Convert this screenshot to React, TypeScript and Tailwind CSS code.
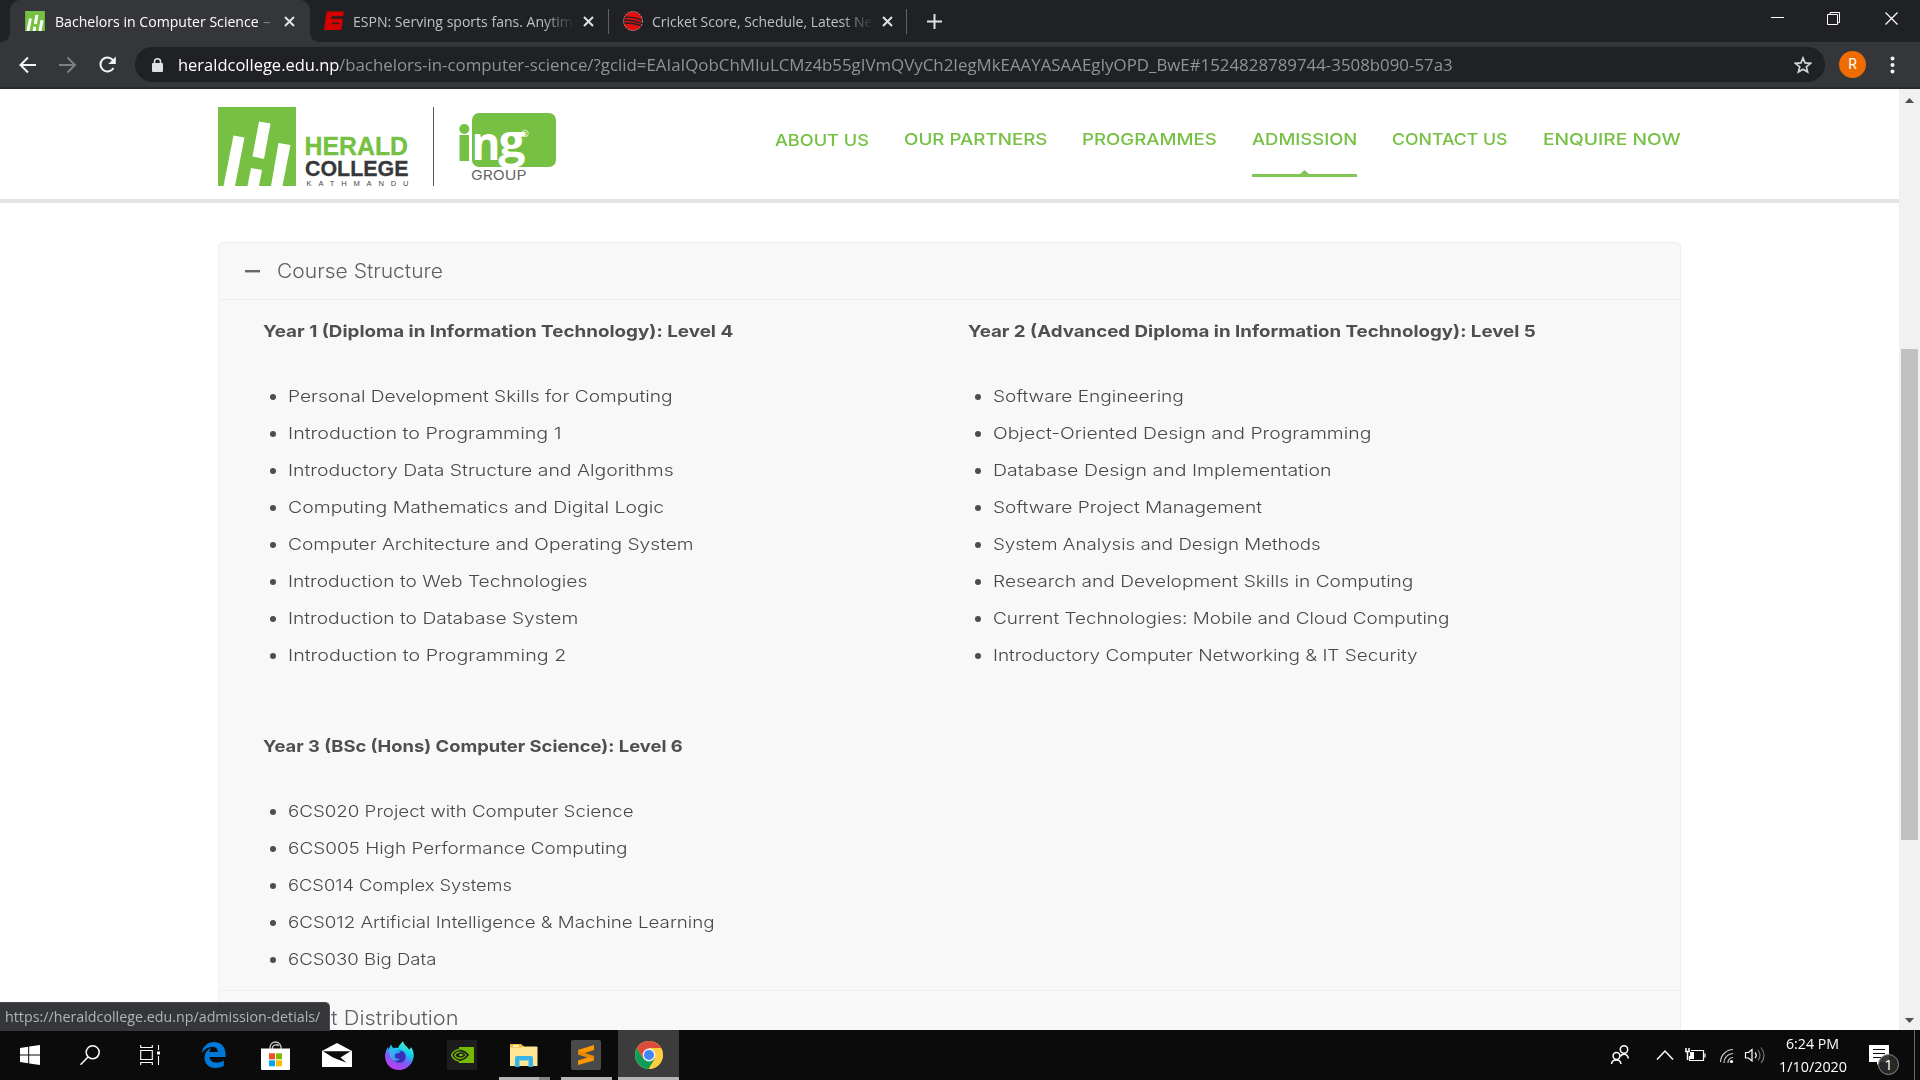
import React, { useLayoutEffect, useRef, useState } from "react";

const UI = "font-['Open_Sans','Noto_Sans',sans-serif]";
const SITE = "font-['Inter','Open_Sans',sans-serif]";

/** Single line of text stretched horizontally to an exact width. */
function Fit({ w, className = "", children }: { w: number; className?: string; children: React.ReactNode }) {
  const ref = useRef<HTMLSpanElement>(null);
  const [k, setK] = useState(1);
  useLayoutEffect(() => {
    const measure = () => {
      if (ref.current && ref.current.offsetWidth) setK(w / ref.current.offsetWidth);
    };
    measure();
    document.fonts.ready.then(measure);
  }, [w]);
  return (
    <span className={"block shrink-0 whitespace-nowrap " + className} style={{ width: w }}>
      <span ref={ref} className="inline-block origin-left" style={{ transform: `scaleX(${k})` }}>
        {children}
      </span>
    </span>
  );
}

function CloseX() {
  return (
    <svg className="size-[11px] shrink-0" viewBox="0 0 11 11" stroke="#dfe1e5" strokeWidth="2">
      <path d="M1 1l9 9M10 1l-9 9" />
    </svg>
  );
}

function HeraldMark({ className }: { className: string }) {
  return (
    <svg className={className} viewBox="0 0 78 79">
      <rect width="78" height="79" fill="#76c043" />
      <g fill="#fff">
        <path d="M15.500 28.500L26.500 30.500L17 79H5.500z" />
        <path d="M41 14.500L52.500 16.500L46 52L34.500 49.500z" />
        <path d="M33 61L44 63L41 79H29.500z" />
        <path d="M60.500 36L72.500 38L64.500 79H53z" />
      </g>
    </svg>
  );
}

function TabStrip() {
  return (
    <div className={"flex h-[42px] bg-[#202124] text-[15px] leading-[20px] " + UI}>
      <div className="flex w-[10px] items-end bg-[#35363a]">
        <div className="h-[42px] w-[10px] rounded-br-[9px] bg-[#202124]" />
      </div>
      <div className="flex h-[42px] w-[300px] items-start rounded-t-[10px] bg-[#35363a] pl-[15px] pt-[11px]">
        <HeraldMark className="h-5 w-5 shrink-0" />
        <div className="ml-[10px] flex w-[229px] shrink-0 overflow-hidden text-white">
          <Fit w={204}>Bachelors in Computer Science</Fit>
          <span className="ml-[4px] text-[#7d7f83]">–</span>
        </div>
        <div className="mt-[5px] shrink-0"><CloseX /></div>
      </div>
      <div className="w-[10px] bg-[#35363a]">
        <div className="h-[42px] w-[10px] rounded-bl-[9px] bg-[#202124]" />
      </div>
      <div className="flex items-start pl-[4px] pt-[11px]">
        <svg className="h-[20px] w-[20px]" viewBox="0 0 20 20">
          <path fill="#d60000" d="M2.800 .5H20L19.200 5.200H7.800L7.500 6.800H1.800zM1.600 7.800H18.800L17.300 19H0L1.100 11z" />
          <path fill="#202124" d="M8 11.700H15.500L15.200 13.300H7.700z" />
          <path fill="#d60000" d="M1.600 6h5.500v3H1.600z" />
        </svg>
        <div className="ml-[9px] w-[221px] text-[#bdc1c6] [mask-image:linear-gradient(to_right,#000_86%,transparent)]">
          <Fit w={220}>ESPN: Serving sports fans. Anytim</Fit>
        </div>
        <div className="ml-[9px] mt-[5px]"><CloseX /></div>
      </div>
      <div className="ml-[14px] mt-[9px] h-[25px] w-px bg-[#5f6368]" />
      <div className="ml-[14px] flex items-start pt-[11px]">
        <svg className="h-5 w-5" viewBox="0 0 20 20">
          <circle cx="10" cy="10" r="9.500" fill="#e01010" />
          <g fill="none" stroke="#202124">
            <path d="M0 6.500q10-1.500 20 3M0 9q10-.5 20 3.500" strokeWidth="1.400" />
            <path d="M0 12q10-.5 20 3" strokeWidth="1.600" />
          </g>
          <circle cx="10" cy="10" r="9.500" fill="none" stroke="#c9b9b9" strokeWidth=".7" strokeDasharray="2 1" />
        </svg>
        <div className="ml-[9px] w-[221px] text-[#bdc1c6] [mask-image:linear-gradient(to_right,#000_86%,transparent)]">
          <Fit w={220}>Cricket Score, Schedule, Latest Ne</Fit>
        </div>
        <div className="ml-[9px] mt-[5px]"><CloseX /></div>
      </div>
      <div className="ml-[13px] mt-[9px] h-[25px] w-px bg-[#5f6368]" />
      <svg className="ml-[20px] mt-[14px] size-[15px]" viewBox="0 0 15 15" stroke="#dfe1e5" strokeWidth="2">
        <path d="M7.500 0v15M0 7.500h15" />
      </svg>
      <div className="ml-auto flex pr-[22px] pt-[12px]">
        <svg className="h-[13px] w-[127px]" viewBox="0 0 127 13" fill="none" stroke="#fff">
          <path d="M0 5.500h13" />
          <path d="M56.500 2.500h10v10h-10zM59 2V.5h9.500v10H67" />
          <path d="M114.500.5l12 12M126.500.5l-12 12" strokeWidth="1.200" />
        </svg>
      </div>
    </div>
  );
}

function Toolbar() {
  return (
    <div className={"flex h-[47px] items-start border-b-2 border-[#28292c] bg-[#35363a] pt-[5px] " + UI}>
      <svg className="ml-[19px] mt-[9px] h-[18px] w-[100px]" viewBox="0 0 100 18" fill="none" strokeWidth="2">
        <path stroke="#f1f3f4" d="M17 9H1.800M9 1.500L1.500 9L9 16.500" />
        <path stroke="#7d7f83" d="M40 9H55.500M48.500 1.500L56 9L48.500 16.500" />
        <path stroke="#f1f3f4" d="M94 4.200A7 7 0 1 0 94.500 12" />
        <path fill="#f1f3f4" d="M96.800 .5V8H89.300z" />
      </svg>
      <div className="ml-[16px] flex h-[35px] w-[1690px] items-center rounded-full bg-[#202124] text-[17px] leading-[22px]">
        <svg className="ml-[17px] h-[14px] w-[11px]" viewBox="0 0 11 14">
          <rect y="5" width="11" height="9" rx="1" fill="#dfe1e5" />
          <path d="M2.500 6V3.800a3 3 0 0 1 6 0V6" fill="none" stroke="#dfe1e5" strokeWidth="1.500" />
        </svg>
        <Fit w={161} className="ml-[15px] text-white">heraldcollege.edu.np</Fit>
        <Fit w={1114} className="text-[#8f9398]">
          /bachelors-in-computer-science/?gclid=EAIaIQobChMIuLCMz4b55gIVmQVyCh2IegMkEAAYASAAEgIyOPD_BwE#1524828789744-3508b090-57a3
        </Fit>
        <svg className="ml-auto mr-[13px] size-[18px]" viewBox="0 0 18 18" fill="none" stroke="#d2d4d7" strokeWidth="1.700">
          <path d="M9 2L11 6.900L16.500 7.300L12.300 10.800L13.600 16L9 13.200L4.400 16L5.700 10.800L1.500 7.300L7 6.900z" />
        </svg>
      </div>
      <div className="ml-[14px] mt-[4px] flex size-[27px] items-center justify-center rounded-full bg-[#ef6c00] font-['Roboto',sans-serif] text-[14px] text-white">R</div>
      <svg className="ml-[24px] mt-[9px] h-[18px] w-[5px]" viewBox="0 0 5 18" fill="#f1f3f4">
        <circle cx="2.500" cy="2.500" r="2" />
        <circle cx="2.500" cy="9" r="2" />
        <circle cx="2.500" cy="15.500" r="2" />
      </svg>
    </div>
  );
}

function Logos() {
  return (
    <div className="flex">
      <HeraldMark className="h-[79px] w-[78px]" />
      <svg className="h-[79px] w-[270px]" viewBox="296 107 270 79">
        <g fontFamily="Liberation Sans, sans-serif">
          <text x="304.500" y="155" fontSize="25" fontWeight="700" fill="#76c043" stroke="#76c043" strokeWidth=".3" textLength="103.500" lengthAdjust="spacingAndGlyphs">HERALD</text>
          <text x="305" y="175.500" fontSize="22.500" fontWeight="700" fill="#38383a" stroke="#38383a" strokeWidth=".3" textLength="103.500" lengthAdjust="spacingAndGlyphs">COLLEGE</text>
          <text x="306.500" y="185.500" fontSize="7.600" fill="#444" textLength="102">KATHMANDU</text>
        </g>
        <path d="M433.500 107v79" stroke="#555" />
        <rect x="472" y="113" width="84" height="54" rx="7" fill="#76c043" />
        <circle cx="464.300" cy="129" r="5" fill="#76c043" />
        <path d="M459.500 135h9.500v26h-9.500z" fill="#76c043" />
        <g fontFamily="Open Sans, sans-serif" fill="#fff" fontWeight="700">
          <text x="471.500" y="160" fontSize="47" textLength="29" lengthAdjust="spacingAndGlyphs">n</text>
          <text x="498.500" y="156.500" fontSize="45" textLength="27" lengthAdjust="spacingAndGlyphs">g</text>
        </g>
        <circle cx="525" cy="133.500" r="3.300" fill="none" stroke="#fff" strokeWidth=".7" />
        <text x="523.200" y="135.500" fontSize="5" fill="#fff" fontFamily="Liberation Sans, sans-serif">R</text>
        <path d="M464 167h70v19h-70z" fill="#fff" />
        <text x="471" y="180" fontSize="13.500" fill="#666" fontFamily="Inter, sans-serif" textLength="55.500" lengthAdjust="spacingAndGlyphs">GROUP</text>
      </svg>
    </div>
  );
}

function SiteHeader() {
  return (
    <header className="flex h-[114px] items-start justify-between border-b-4 border-[#e4e4e4] bg-white pl-[218px] pr-[218px] pt-[18px]">
      <Logos />
      <nav className={"flex gap-[35px] pt-[22px] text-[16px] font-medium leading-[20px] text-[#76c043] " + SITE}>
        <Fit w={94} className="pt-px">ABOUT US</Fit>
        <Fit w={143}>OUR PARTNERS</Fit>
        <Fit w={135}>PROGRAMMES</Fit>
        <div className="flex flex-col items-center">
          <Fit w={105}>ADMISSION</Fit>
          <svg className="mt-[21px] h-[4px] w-[9px]" viewBox="0 0 9 4"><path fill="#82c655" d="M4.500 0L9 4H0z" /></svg>
          <div className="h-[3px] w-[105px] bg-[#82c655]" />
        </div>
        <Fit w={116}>CONTACT US</Fit>
        <Fit w={138}>ENQUIRE NOW</Fit>
      </nav>
    </header>
  );
}

type Year = { title: string; width: number; items: [string, number][] };

const year1: Year = {
  title: "Year 1 (Diploma in Information Technology): Level 4",
  width: 470,
  items: [
    ["Personal Development Skills for Computing", 384],
    ["Introduction to Programming 1", 274],
    ["Introductory Data Structure and Algorithms", 386],
    ["Computing Mathematics and Digital Logic", 376],
    ["Computer Architecture and Operating System", 406],
    ["Introduction to Web Technologies", 299],
    ["Introduction to Database System", 290],
    ["Introduction to Programming 2", 278],
  ],
};

const year2: Year = {
  title: "Year 2 (Advanced Diploma in Information Technology): Level 5",
  width: 568,
  items: [
    ["Software Engineering", 191],
    ["Object-Oriented Design and Programming", 378],
    ["Database Design and Implementation", 338],
    ["Software Project Management", 269],
    ["System Analysis and Design Methods", 328],
    ["Research and Development Skills in Computing", 420],
    ["Current Technologies: Mobile and Cloud Computing", 456],
    ["Introductory Computer Networking & IT Security", 425],
  ],
};

const year3: Year = {
  title: "Year 3 (BSc (Hons) Computer Science): Level 6",
  width: 420,
  items: [
    ["6CS020 Project with Computer Science", 345],
    ["6CS005 High Performance Computing", 340],
    ["6CS014 Complex Systems", 224],
    ["6CS012 Artificial Intelligence & Machine Learning", 427],
    ["6CS030 Big Data", 149],
  ],
};

function YearBlock({ year }: { year: Year }) {
  return (
    <section className="text-[16.5px] leading-[37px]">
      <Fit w={year.width} className="font-bold text-[#4f4f4f]">{year.title}</Fit>
      <ul className="mt-[28px]">
        {year.items.map(([label, width]) => (
          <li key={label} className="flex h-[37px] items-center pl-[7px]">
            <span className="mr-[12px] mt-px size-[6px] shrink-0 rounded-full bg-[#4d4d4d]" />
            <Fit w={width} className="font-light text-[#484848]">{label}</Fit>
          </li>
        ))}
      </ul>
    </section>
  );
}

function Accordion() {
  return (
    <div className={"ml-[218px] mt-[39px] w-[1463px] rounded-t-[5px] border border-[#eeeeee] bg-[#f8f8f8] " + SITE}>
      <div className="flex h-[57px] items-center border-b border-[#eeeeee] pl-[26px] text-[19.5px] font-light text-[#5f5f5f]">
        <span className="mr-[17px] h-[3px] w-[15px] border-b border-[#bbb] bg-[#666]" />
        <Fit w={166} className="pt-[2px]">Course Structure</Fit>
      </div>
      <div className="grid grid-cols-[705px_1fr] gap-y-[54px] border-b border-[#eeeeee] pb-[12px] pl-[44px] pt-[13px]">
        <YearBlock year={year1} />
        <YearBlock year={year2} />
        <YearBlock year={year3} />
      </div>
      <div className="flex h-[56px] items-center pl-[58px] text-[19.5px] font-light text-[#5f5f5f]">
        <Fit w={182}>Credit Distribution</Fit>
      </div>
    </div>
  );
}

function Scrollbar() {
  return (
    <div className="flex h-full w-[21px] flex-col items-center bg-[#f1f1f1]">
      <svg className="mt-[9px] h-[5px] w-[9px]" viewBox="0 0 9 5"><path fill="#505050" d="M4.500 0L9 5H0z" /></svg>
      <div className="mt-[246px] h-[491px] w-[17px] bg-[#c1c1c1]" />
      <svg className="mb-[7px] mt-auto h-[5px] w-[9px]" viewBox="0 0 9 5"><path fill="#505050" d="M4.500 5L9 0H0z" /></svg>
    </div>
  );
}

function WindowsIcon() {
  return (
    <svg className="size-5" viewBox="0 0 20 20" fill="#fff">
      <path d="M0 2.900L8.200 1.700V9.500H0zM9.200 1.500L20 0V9.500H9.200zM0 10.500H8.200V18.300L0 17.100zM9.200 10.500H20V20L9.200 18.500z" />
    </svg>
  );
}

function SearchIcon() {
  return (
    <svg className="size-5" viewBox="0 0 20 20" fill="none" stroke="#fff" strokeWidth="1.500">
      <circle cx="12.700" cy="7.300" r="6.500" />
      <path d="M8 12L.5 19.700" />
    </svg>
  );
}

function TaskViewIcon() {
  return (
    <svg className="h-5 w-5" viewBox="0 0 20 20" fill="none" stroke="#fff" strokeWidth="1.100">
      <path d="M.7 0V2.500H12.300V0M.7 5.500H12.300V14.500H.7zM.7 20V17.500H12.300V20M18.500 0V5M18.500 11V20" />
      <path d="M17 6.500h3v3h-3z" fill="#fff" stroke="none" />
    </svg>
  );
}

function EdgeIcon() {
  return (
    <svg className="h-[26px] w-[25px]" viewBox="0 0 25 26">
      <path fill="#0078d7" d="M0.700 11.500C1.500 4.500 6.500 0 13 0C20.500 0 24.500 5.500 24.500 11.500V15H8.500C8.800 19 12 20.700 15.500 20.700C18.500 20.700 20.800 19.800 22.800 18.600V24C20.500 25.300 17.800 26 14.500 26C7.500 26 3.500 21.500 3.500 15.800C3.500 11.500 6 7.800 9.800 6C9 7.200 8.500 8.500 8.500 10H16.800C16.800 7 15.200 5 11.500 5C6.800 5 3 7.500 0.700 11.500z" />
    </svg>
  );
}

function StoreIcon() {
  return (
    <svg className="h-[29px] w-[29px]" viewBox="0 0 29 29">
      <path d="M9 8V6.500A5.500 5.500 0 0 1 20 6.500V8M11.500 8V6A4 4 0 0 1 18 5" fill="none" stroke="#ccc" strokeWidth="1.300" />
      <path d="M0 7.500H29V28a1 1 0 0 1-1 1H1a1 1 0 0 1-1-1z" fill="#fff" />
      <path fill="#f25022" d="M8 12.300h6v6H8z" />
      <path fill="#7fba00" d="M15 12.300h6v6h-6z" />
      <path fill="#00a4ef" d="M8 19.300h6v6H8z" />
      <path fill="#ffb900" d="M15 19.300h6v6h-6z" />
    </svg>
  );
}

function MailIcon() {
  return (
    <svg className="h-[24px] w-[30px]" viewBox="0 0 30 24">
      <path fill="#fff" d="M0 8L15 0L30 8V24H0z" />
      <path fill="#0b0b0b" d="M1 8.300H28.500L18.500 14.500L24.500 19.800L11 14.500z" />
    </svg>
  );
}

function FirefoxIcon() {
  return (
    <svg className="h-[29px] w-[29px]" viewBox="0 0 29 29">
      <defs>
        <linearGradient id="ff" x1=".8" y1="0" x2=".35" y2="1">
          <stop offset="0" stopColor="#54ffbd" />
          <stop offset=".4" stopColor="#0fc8f2" />
          <stop offset=".65" stopColor="#7a5cf5" />
          <stop offset="1" stopColor="#c63cf0" />
        </linearGradient>
      </defs>
      <path fill="url(#ff)" d="M18 0C18.500 4 22 5 24 8.500C26 7 26 6 26 6C30 12 29 17 27 21C24 26.500 19 29 14 29C6 29 0 23 0 15C0 10.500 2 8 3 6L3.500 8.500L6 3.500L8 7C10 6.500 11 6.500 13 7C14 4 16 3 18 0z" />
      <circle cx="14.500" cy="15.500" r="6.300" fill="#3a2fb8" />
      <path fill="#35b6f5" d="M4 9.500C8 6 13 9 16 10.500C14 13 11 11.500 10 14C9 17 12 18 15 18C12 21 6 19.500 5 15z" opacity=".85" />
    </svg>
  );
}

function NvidiaIcon() {
  return (
    <div className="flex size-[30px] items-center justify-center bg-[#1d1d1d]">
      <svg className="h-[16px] w-[23px]" viewBox="0 0 23 16">
        <path fill="#76b900" d="M8 0H23V16H8z" />
        <path d="M0 8C4 2.500 12 2 17 8C13 13 8 14.500 4 11.500" fill="none" stroke="#1d1d1d" strokeWidth="1.800" />
        <path d="M8 2.500C4.500 3 2 5 .5 8C2.500 12 5 13.500 8 14" fill="none" stroke="#76b900" strokeWidth="1.500" />
        <path d="M8 5C5.500 5.500 4.500 6.500 3.700 8C4.500 10 6 11 8 11.300" fill="none" stroke="#76b900" strokeWidth="1.300" />
        <path d="M7 7.500C9 5 12 6 13.500 8C11.500 10.500 9 10.500 7 8.500" fill="none" stroke="#1d1d1d" strokeWidth="1.400" />
      </svg>
    </div>
  );
}

function ExplorerIcon() {
  return (
    <svg className="h-[23px] w-[28px]" viewBox="0 0 28 23">
      <path fill="#f5b92e" d="M0 0H11L14 2.500V5H0z" />
      <path fill="#fff" d="M3 1.200h6v1.500H3z" />
      <path fill="#ffe694" d="M0 3.500H11L13.500 2.500H26.500a1 1 0 0 1 1 1V22H0z" />
      <path fill="#37b5ea" d="M5 23V14a2 2 0 0 1 2-2H21a2 2 0 0 1 2 2V23H18.500V16.500H9.500V23z" />
    </svg>
  );
}

function SublimeIcon() {
  return (
    <div className="flex size-[30px] items-center justify-center rounded-[2px] bg-[#4a4a4a]">
      <svg className="h-[20px] w-[16px]" viewBox="0 0 16 20">
        <path fill="#ff9800" d="M0 5L16 0V5L6.500 8L16 11V15.500L0 20V15.500L9.500 12.500L0 9.500z" />
        <path fill="#d97a00" d="M0 5.500L6.500 8L16 11V14L0 9.500z" opacity=".55" />
      </svg>
    </div>
  );
}

function ChromeIcon() {
  return (
    <svg className="size-[28px]" viewBox="0 0 28 28">
      <circle cx="14" cy="14" r="14" fill="#ffcd40" />
      <path fill="#dd4b3e" d="M1.900 7A14 14 0 0 1 26.100 7H14L8 17.500z" />
      <path fill="#109d58" d="M1.900 7A14 14 0 0 0 13.700 28L20 17.500H8z" />
      <path fill="#ffcd40" d="M26.100 7.300A14 14 0 0 1 13.700 28L20.200 17.400L19.500 7.300z" />
      <circle cx="14" cy="14" r="6.400" fill="#f1f1f1" />
      <circle cx="14" cy="14" r="5" fill="#4285f4" />
    </svg>
  );
}

function AppCell({ children, bar, wide = true, active = false }: { children: React.ReactNode; bar?: React.ReactNode; wide?: boolean; active?: boolean }) {
  return (
    <div className={"flex h-[50px] flex-col items-center " + (wide ? "w-[62px] " : "w-[61px] ") + (active ? "bg-[#3c3c3c]" : "")}>
      <div className="flex h-[47px] items-center pt-[3px]">{children}</div>
      {bar}
    </div>
  );
}

function Taskbar() {
  return (
    <div className={"flex h-[50px] bg-[#0b0b0b] text-[15px] text-white " + UI}>
      <div className="flex w-[60px] items-center justify-center"><WindowsIcon /></div>
      <div className="flex w-[60px] items-center justify-center"><SearchIcon /></div>
      <div className="flex w-[62px] items-center justify-center pb-[1px] pr-[2px]"><TaskViewIcon /></div>
      <AppCell><EdgeIcon /></AppCell>
      <AppCell><StoreIcon /></AppCell>
      <AppCell><MailIcon /></AppCell>
      <AppCell><FirefoxIcon /></AppCell>
      <div className="w-px" />
      <AppCell><NvidiaIcon /></AppCell>
      <AppCell bar={<div className="flex h-[3px] w-[51px] bg-[#b8b4b5]"><div className="ml-auto w-[11px] bg-[#868284]" /></div>}><ExplorerIcon /></AppCell>
      <AppCell bar={<div className="h-[3px] w-[51px] bg-[#b8b4b5]" />}><SublimeIcon /></AppCell>
      <div className="w-px" />
      <AppCell active wide={false} bar={<div className="h-[3px] w-full bg-[#b8b4b5]" />}><ChromeIcon /></AppCell>
      <svg className="ml-auto mt-[14px] h-[21px] w-[156px]" viewBox="1610 1044 156 21" fill="none" stroke="#fff" strokeWidth="1.500">
        <circle cx="1624" cy="1049.500" r="3.700" />
        <path d="M1620.500 1056.500C1621 1054 1627 1052 1628.500 1058.500" />
        <circle cx="1616.500" cy="1056" r="3.400" />
        <path d="M1611.500 1064C1612 1058.500 1620.500 1058.500 1621 1064" />
        <path d="M1657 1059.500L1665 1051L1673 1059.500" />
        <path d="M1691 1050.500H1703.500V1060.500H1689.500V1056M1705 1053.500V1057.500" strokeWidth="1.200" />
        <path d="M1690 1052h4v7h-4z" fill="#fff" stroke="none" />
        <path d="M1686 1048v3M1689 1048v3M1685 1051.500h5M1687.500 1052V1060" strokeWidth="1.500" />
        <circle cx="1731.500" cy="1061.500" r="1.600" fill="#fff" stroke="none" />
        <path d="M1728 1063A5 5 0 0 1 1733 1057.500M1724 1063A9 9 0 0 1 1733 1053.500M1720.500 1062A13 13 0 0 1 1733 1049.500" stroke="#ccc" strokeWidth="1.200" />
        <path d="M1745.500 1052.500H1748.500L1752 1049.500V1061L1748.500 1058H1745.500z" strokeWidth="1.200" />
        <path d="M1755 1052.500q2.500 3 0 5.500" strokeWidth="1.200" />
        <path d="M1758 1050q4 5.500 0 10.500M1761 1047.500q6 8 0 15.500" stroke="#777" strokeWidth="1.200" />
      </svg>
      <div className="ml-[12px] flex w-[69px] flex-col items-center pt-[2px] leading-[23px]">
        <Fit w={53}>6:24 PM</Fit>
        <Fit w={68}>1/10/2020</Fit>
      </div>
      <svg className="ml-[22px] mt-[14px] h-[32px] w-[32px]" viewBox="0 0 32 32">
        <path fill="#fff" d="M0 1H20V18H11L8 21V18H0z" />
        <path stroke="#0b0b0b" strokeWidth="1.200" d="M4 5.500H16M4 9.500H16M4 13.500H12" />
        <circle cx="19.500" cy="20.500" r="10" fill="#2b2b2b" fillOpacity=".92" stroke="#8a8a8a" />
        <text x="19.500" y="26" textAnchor="middle" fontSize="15" fill="#fff" fontFamily="Open Sans, sans-serif">1</text>
      </svg>
      <div className="ml-[13px] mr-[5px] h-[50px] w-px bg-[#6a6a6a]" />
    </div>
  );
}

export default function App() {
  return (
    <div className="flex h-[1080px] w-[1920px] flex-col overflow-hidden bg-white">
      <TabStrip />
      <Toolbar />
      <div className="relative flex h-[941px]">
        <main className="h-[941px] w-[1899px] overflow-hidden">
          <SiteHeader />
          <Accordion />
        </main>
        <Scrollbar />
        <div className={"absolute -bottom-px left-0 z-10 flex h-[29px] w-[330px] items-center rounded-tr-[5px] border-r border-t border-[#4a4b4f] bg-[#35363a] pb-[2px] pl-[5px] text-[15px] text-[#b0b3b8] " + UI}>
          <Fit w={315}>https://heraldcollege.edu.np/admission-detials/</Fit>
        </div>
      </div>
      <Taskbar />
    </div>
  );
}
